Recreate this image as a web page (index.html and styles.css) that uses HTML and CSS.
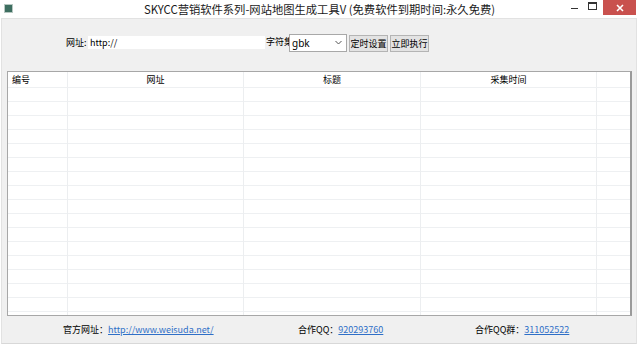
FILE: index.html
```html
<!DOCTYPE html>
<html lang="zh-CN">
<head>
    <meta charset="UTF-8">
    <title>SKYCC网站地图生成工具</title>
    <link rel="stylesheet" href="styles.css">
</head>
<body>
<div class="window">
    <div class="titlebar">
        <span class="app-icon"></span>
        <span class="title">SKYCC营销软件系列-网站地图生成工具V (免费软件到期时间:永久免费)</span>
        <div class="controls">
            <span class="btn-min"></span>
            <span class="btn-max"></span>
            <span class="btn-close">
                <svg width="8" height="8" viewBox="0 0 8 8"><path d="M1 1L7 7M7 1L1 7" stroke="#fff" stroke-width="1.6"/></svg>
            </span>
        </div>
    </div>
    <div class="client">
        <div class="toolbar">
            <span class="label">网址:</span>
            <div class="url-input">http://</div>
            <span class="charset-label">字符集</span>
            <div class="select">
                <span>gbk</span>
                <svg width="7" height="5" viewBox="0 0 7 5"><path d="M0.5 1L3.5 4L6.5 1" fill="none" stroke="#555" stroke-width="1"/></svg>
            </div>
            <button class="btn">定时设置</button>
            <button class="btn">立即执行</button>
        </div>

        <div class="list">
            <div class="list-head">
                <div class="col col-id left">编号</div>
                <div class="col col-url">网址</div>
                <div class="col col-title">标题</div>
                <div class="col col-time">采集时间</div>
                <div class="col col-rest"></div>
            </div>
            <div class="list-body">
                <div class="col col-id"></div>
                <div class="col col-url"></div>
                <div class="col col-title"></div>
                <div class="col col-time"></div>
                <div class="col col-rest"></div>
            </div>
        </div>

        <div class="footer">
            <span class="foot-item site">官方网址：<a href="#">http://www.weisuda.net/</a></span>
            <span class="foot-item qq">合作QQ：<a href="#">920293760</a></span>
            <span class="foot-item group">合作QQ群：<a href="#">311052522</a></span>
        </div>
    </div>
</div>
</body>
</html>
```

FILE: styles.css
```css
body {
    margin: 0;
    background: #fff;
    font-family: "Noto Sans CJK SC", "Noto Sans", sans-serif;
    font-size: 9px;
    color: #000;
}

.window {
    width: 640px;
    height: 348px;
    overflow: hidden;
}

.titlebar {
    height: 18px;
    display: flex;
    align-items: center;
    background: #fff;
}

.app-icon {
    width: 7px;
    height: 7px;
    margin-left: 4px;
    margin-top: -2px;
    background: #3d6e60;
    border: 1px solid #b8c8c2;
}

.title {
    flex: 1;
    text-align: center;
    font-size: 11.3px;
    color: #1a1a1a;
    margin-left: 55px;
    margin-top: -1px;
    white-space: nowrap;
}

.controls {
    display: flex;
    align-items: flex-start;
    align-self: flex-start;
    height: 16px;
}

.btn-min {
    width: 7px;
    height: 1px;
    background: #333;
    margin-top: 8px;
    margin-right: 10px;
}

.btn-max {
    width: 7px;
    height: 5px;
    border: 1px solid #333;
    border-top-width: 2px;
    margin-top: 2px;
    margin-right: 6px;
}

.btn-close {
    width: 33px;
    height: 15px;
    background: #c9514e;
    display: flex;
    align-items: center;
    justify-content: center;
    margin-right: 4px;
}

.client {
    height: 324px;
    margin: 0 3px 0 1px;
    background: #f0f0f0;
    border: 1px solid #e2e2e2;
    border-bottom-color: #d8d8d8;
    display: flex;
    flex-direction: column;
}

.toolbar {
    display: flex;
    align-items: center;
    height: 19px;
    margin-top: 14px;
    padding-left: 64px;
}

.label {
    width: 22px;
}

.url-input {
    width: 175px;
    height: 13px;
    line-height: 13px;
    padding-left: 2px;
    background: #fff;
    margin-right: 1px;
}

.charset-label {
    white-space: nowrap;
    margin-top: -3px;
    margin-right: -4px;
}

.select {
    border: 1px solid #a8a8a8;
    background: #fff;
    display: flex;
    align-items: center;
    justify-content: space-between;
    padding: 0 4px 0 2px;
    box-sizing: border-box;
    width: 58px;
    height: 18px;
    font-size: 10px;
    font-family: "Noto Sans", sans-serif;
}

.btn {
    height: 17px;
    margin-left: 2px;
    margin-top: 2px;
    padding: 0;
    width: 39px;
    white-space: nowrap;
    font-family: inherit;
    font-size: 9px;
    background: #e3e3e3;
    border: 1px solid #b4b4b4;
    color: #000;
    line-height: 14px;
}

.list {
    margin: 19px 0 0 5px;
    width: 625px;
    height: 245px;
    box-sizing: border-box;
    border: 1px solid #a7a7a7;
    border-right: 2px solid #9a9a9a;
    background: #fff;
    display: flex;
    flex-direction: column;
}

.list-head,
.list-body {
    display: flex;
}

.list-head {
    height: 15px;
    line-height: 15px;
    border-bottom: 1px solid #eef0f2;
}

.list-body {
    flex: 1;
    background: repeating-linear-gradient(to bottom, transparent 0, transparent 13px, #eef0f2 13px, #eef0f2 14px);
}

.col {
    border-right: 1px solid #eceef0;
    text-align: center;
    box-sizing: border-box;
}

.col.left {
    text-align: left;
    padding-left: 4px;
}

.col-id { width: 60px; }
.col-url { width: 176px; }
.col-title { width: 177px; }
.col-time { width: 176px; }
.col-rest { flex: 1; border-right: none; }

.footer {
    flex: 1;
    display: flex;
    align-items: center;
    padding-left: 61px;
    padding-bottom: 1px;
}

.foot-item.site { width: 235px; }
.foot-item.qq { width: 177px; }

.footer a {
    color: #2f6fc7;
    text-decoration: underline;
}
```
